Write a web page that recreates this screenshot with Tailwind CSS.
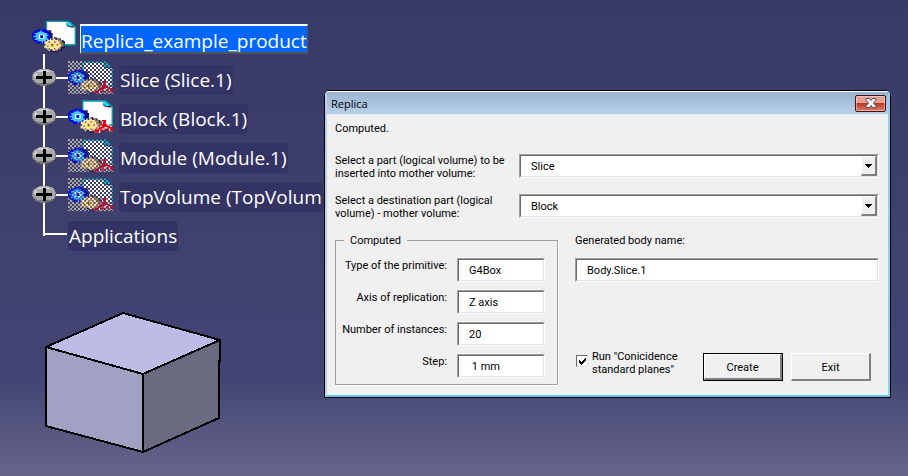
<!DOCTYPE html>
<html lang="en">
<head>
<meta charset="utf-8">
<title>Replica</title>
<script src="https://cdn.jsdelivr.net/npm/@tailwindcss/browser@4"></script>
</head>
<body class="relative min-h-screen overflow-hidden bg-linear-to-b from-[#393967] via-[#454575] via-80% to-[#66668b] font-['Open_Sans','Noto_Sans',sans-serif]">

<!-- Shared icon shapes -->
<svg class="absolute size-0" aria-hidden="true">
  <defs>
    <pattern id="checker" width="4" height="4" patternUnits="userSpaceOnUse">
      <path d="M0 0H2V2H0zM2 2H4V4H2z" fill="#fff"/>
    </pattern>
    <mask id="mesh" maskUnits="userSpaceOnUse" x="0" y="0" width="45" height="33"><rect width="45" height="33" fill="url(#checker)"/></mask>
    <symbol id="page" viewBox="0 0 32 23">
      <path d="M10 0H27V1H29V2H30V3H31V4H32V18H10z" fill="#00a0a8"/>
      <path d="M11 1H25V4H31V17H11z" fill="#fff"/>
      <path d="M25 1H27V2H28V3H29V4H27V3H26V2H25z" fill="#40e0ff"/>
      <path d="M26 4H31V5H28V4.500H26z" fill="#101050"/>
    </symbol>
    <symbol id="gears" viewBox="0 0 32 23">
      <path d="M5 6H7V7H8V6H10V7H12V8H13V9H14V13H13V15H12V16H10V17H8V16H6V17H4V16H3V15H1V13H0V9H1V8H2V7H5z" fill="#0000e8"/>
      <path d="M12 7H14V9H15V13H14V15H12V14H13V9H12z" fill="#15155a"/>
      <path d="M4 8H6V7H7V8H9V9H11V10H12V11H11V13H12V14H10V15H8V16H7V15H4V14H2V13H3V12H1V11H3V10H2V9H4z" fill="#40c8ff"/>
      <path d="M5 10H9V13H5z" fill="#fff"/><path d="M6 10.500H8V12.500H6z" fill="#0000e8"/>
      <path d="M13 13H16V12H18V13H21V14H23V15H24V17H23V18H24V20H22V22H19V23H15V22H13z" fill="#15155a"/>
      <path d="M18 13H20V14H22V16H23V19H21V21H19V22H17V20H18z" fill="#907c58"/>
      <path d="M11 14H13V13H14V14H15V13H17V14H19V15H20V17H21V19H20V20H19V21H17V22H15V21H13V22H12V21H11V20H9V18H10V17H9V15H11z" fill="#ffe29a"/>
      <path d="M12 15H13V16H12zM16 15H17V16H16zM11 18H12V19H11zM12 20H13V21H12zM16 20H17V21H16zM18 17H19V18H18z" fill="#504870"/>
      <path d="M14 17H16V19H14z" fill="#d8c800"/><path d="M14 17H15V18H14z" fill="#222"/>
    </symbol>
    <symbol id="part" viewBox="0 0 32 23">
      <path d="M24 14H28V17H29V18H31V19H32V22H29V20H26V21H23V23H19V21H21V19H23V17H24z" fill="#fff"/>
      <path d="M24 14H27V17H28V18H30V19H32V22H30V20H28V19H26V20H24V21H22V23H19V21H21V20H22V19H24V17H25V15H24z" fill="#e80010"/>
      <path d="M25 16H26V18H25zM23 21H26V22H23zM28 20H29V22H28zM23 16H24V18H23z" fill="#e80010"/>
    </symbol>
    <symbol id="plus" viewBox="0 0 24 17">
      <path d="M7 0H17V1H20V2H22V4H23V6H24V11H23V13H21V15H18V16H15V17H8V16H5V15H3V13H1V11H0V5H1V3H3V2H5V1H7z" fill="#777"/>
      <path d="M7 0H17V1H20V2H22V4H23V11H22V13H19V14H5V13H3V11H1V5H2V3H4V2H5V1H7z" fill="#a8a8a8"/>
      <path d="M7 1H16V2H18V3H5V2H7zM3 4H5V8H2V6H3z" fill="#d0d0d0"/>
      <path d="M11 2H14V7H20V10H14V15H11V10H4V7H11z" fill="#000"/>
    </symbol>
    <symbol id="icon-solid" viewBox="0 0 45 33">
      <use href="#page" width="45" height="33"/><use href="#gears" width="45" height="33"/><use href="#part" width="45" height="33"/>
    </symbol>
    <symbol id="icon-mesh" viewBox="0 0 45 33">
      <path d="M0 0H15V10H21V18H34V23H45V33H0z" fill="#a8a8a0" mask="url(#mesh)"/>
      <g mask="url(#mesh)"><use href="#page" width="45" height="33"/></g>
      <use href="#gears" width="45" height="33" opacity=".4"/>
      <g mask="url(#mesh)"><use href="#gears" width="45" height="33"/></g>
      <use href="#part" width="45" height="33" opacity=".3"/>
      <g mask="url(#mesh)"><use href="#part" width="45" height="33"/></g>
    </symbol>
  </defs>
</svg>

<!-- Specification tree -->
<nav aria-label="Specification tree" class="w-max pl-8 pt-5 text-[19px] text-white">
  <div class="flex h-[34px] items-start gap-1">
    <svg class="h-[33px] w-[44px]" viewBox="0 0 45 33"><use href="#page" width="45" height="33"/><use href="#gears" width="45" height="33"/></svg>
    <span class="mt-1 h-[30px] border-t-2 border-l border-r border-b-2 border-t-white border-l-white border-r-[#555] border-b-[#555] bg-[#0066ff] leading-[30px]">Replica_example_product</span>
  </div>
  <ul class="relative pt-1">
    <li class="absolute top-0 left-[11px] h-[182px] w-0.5 bg-white" aria-hidden="true"></li>
    <li class="flex h-[39px] items-center">
      <button aria-label="Expand Slice" class="relative"><svg class="h-[17px] w-6" shape-rendering="crispEdges"><use href="#plus"/></svg></button>
      <span class="h-0.5 w-3 bg-white"></span>
      <svg class="h-[33px] w-[45px]"><use href="#icon-mesh"/></svg>
      <span class="ml-1.5 mt-1 h-[30px] rounded-sm bg-[#333364] px-px leading-[30px]">Slice (Slice.1)</span>
    </li>
    <li class="flex h-[39px] items-center">
      <button aria-label="Expand Block" class="relative"><svg class="h-[17px] w-6" shape-rendering="crispEdges"><use href="#plus"/></svg></button>
      <span class="h-0.5 w-3 bg-white"></span>
      <svg class="h-[33px] w-[45px]"><use href="#icon-solid"/></svg>
      <span class="ml-1.5 mt-1 h-[30px] rounded-sm bg-[#333364] px-px leading-[30px]">Block (Block.1)</span>
    </li>
    <li class="flex h-[39px] items-center">
      <button aria-label="Expand Module" class="relative"><svg class="h-[17px] w-6" shape-rendering="crispEdges"><use href="#plus"/></svg></button>
      <span class="h-0.5 w-3 bg-white"></span>
      <svg class="h-[33px] w-[45px]"><use href="#icon-mesh"/></svg>
      <span class="ml-1.5 mt-1 h-[30px] rounded-sm bg-[#333364] px-px leading-[30px]">Module (Module.1)</span>
    </li>
    <li class="flex h-[39px] items-center">
      <button aria-label="Expand TopVolume" class="relative"><svg class="h-[17px] w-6" shape-rendering="crispEdges"><use href="#plus"/></svg></button>
      <span class="h-0.5 w-3 bg-white"></span>
      <svg class="h-[33px] w-[45px]"><use href="#icon-mesh"/></svg>
      <span class="ml-1.5 mt-1 h-[30px] rounded-sm bg-[#333364] px-px leading-[30px]">TopVolume (TopVolum</span>
    </li>
    <li class="flex h-[39px] items-center pl-[11px]">
      <span class="h-0.5 w-6 bg-white"></span>
      <span class="ml-px mt-1 h-[30px] rounded-sm bg-[#333364] px-px leading-[30px]">Applications</span>
    </li>
  </ul>
</nav>

<!-- Modelled solid -->
<svg class="absolute left-[44px] top-[311px] h-[144px] w-[178px]" viewBox="44 311 178 144" role="img" aria-label="Block solid" shape-rendering="crispEdges" stroke="#000" stroke-width="2" stroke-linejoin="round">
  <path d="M46 347L123 313L220 340L143 374z" fill="#bcbce6"/>
  <path d="M46 347L143 374V452L46 426z" fill="#a1a1c3"/>
  <path d="M143 374L220 340V361H219V418L143 452z" fill="#6a6a80"/>
</svg>

<!-- Replica window -->
<section role="dialog" aria-labelledby="dlg-title" class="absolute left-[324px] right-[17px] top-[90px] rounded-t-md border border-black bg-[#f0f0f0] font-[Roboto,sans-serif] text-[11px] leading-[13px] text-black">
  <div class="rounded-t-sm border-t border-l-2 border-r-2 border-b-2 border-t-white border-l-[#b9d1ea] border-r-[#8fd0ee] border-b-[#5fc4e8]">
    <header class="flex h-[22px] items-center justify-between bg-linear-to-b from-[#9ab3d0] to-[#b9d1ea] pl-1 pr-0.5">
      <h1 id="dlg-title" class="font-['Open_Sans',sans-serif] text-[11px]">Replica</h1>
      <button aria-label="Close" class="flex h-[17px] w-[31px] items-center justify-center rounded-xs border border-[#43121a] bg-linear-to-b from-[#e8a090] from-45% via-[#bb3a24] via-50% to-[#d87c68] shadow-[inset_0_0_0_1px_#ffffff66]">
        <svg class="h-2.5 w-3" viewBox="0 0 12 10"><path d="M1 .5H4.500L6 2.500L7.500 .5H11V2L8.500 5L11 8V9.500H7.500L6 7.500L4.500 9.500H1V8L3.500 5L1 2z" fill="#f4f4f4" stroke="#555566"/></svg>
      </button>
    </header>
    <form class="pt-2 pr-[9px] pb-2.5 pl-2" onsubmit="return false">
      <p>Computed.</p>
      <div class="mt-[19px] flex items-start">
        <label for="part-select" class="w-[184px] shrink-0">Select a part (logical volume) to be<br>inserted into mother volume:</label>
        <div class="relative h-6 flex-1 border border-t-[#a0a0a0] border-l-[#a0a0a0] border-r-white border-b-white">
          <select id="part-select" class="block h-full w-full appearance-none border border-t-[#696969] border-l-[#696969] border-r-[#e3e3e3] border-b-[#e3e3e3] bg-white pl-2.5"><option>Slice</option></select>
          <span class="pointer-events-none absolute top-px right-px bottom-px flex w-4 items-center justify-center border-t border-l border-r-2 border-b-2 border-t-white border-l-white border-r-[#808080] border-b-[#808080] bg-[#f0f0f0]"><svg class="h-1 w-[7px]" viewBox="0 0 7 4" shape-rendering="crispEdges"><path d="M0 0H7V1H6V2H5V3H4V4H3V3H2V2H1V1H0z"/></svg></span>
        </div>
      </div>
      <div class="mt-3.5 flex items-start">
        <label for="dest" class="w-[184px] shrink-0">Select a destination part (logical<br>volume) - mother volume:</label>
        <div class="relative h-6 flex-1 border border-t-[#a0a0a0] border-l-[#a0a0a0] border-r-white border-b-white">
          <select id="dest" class="block h-full w-full appearance-none border border-t-[#696969] border-l-[#696969] border-r-[#e3e3e3] border-b-[#e3e3e3] bg-white pl-2.5"><option>Block</option></select>
          <span class="pointer-events-none absolute top-px right-px bottom-px flex w-4 items-center justify-center border-t border-l border-r-2 border-b-2 border-t-white border-l-white border-r-[#808080] border-b-[#808080] bg-[#f0f0f0]"><svg class="h-1 w-[7px]" viewBox="0 0 7 4" shape-rendering="crispEdges"><path d="M0 0H7V1H6V2H5V3H4V4H3V3H2V2H1V1H0z"/></svg></span>
        </div>
      </div>
      <div class="mt-3.5 flex gap-[17px]">
        <fieldset class="w-[223px] min-w-0 shrink-0 border border-[#a0a0a0] pr-3 pl-1.5 pb-1.5 shadow-[1px_1px_0_#fff]">
          <legend class="ml-0.5 px-1.5">Computed</legend>
          <div class="grid grid-cols-[minmax(0,1fr)_88px] gap-x-2.5 gap-y-2 pt-[11px] text-right">
            <label for="prim" class="pt-px whitespace-nowrap">Type of the primitive:</label>
            <div class="h-6 border border-t-[#a0a0a0] border-l-[#a0a0a0] border-r-white border-b-white"><input id="prim" value="G4Box" class="block h-full w-full border border-t-[#696969] border-l-[#696969] border-r-[#e3e3e3] border-b-[#e3e3e3] bg-white pl-2.5"></div>
            <label for="axis" class="pt-px whitespace-nowrap">Axis of replication:</label>
            <div class="h-6 border border-t-[#a0a0a0] border-l-[#a0a0a0] border-r-white border-b-white"><input id="axis" value="Z axis" class="block h-full w-full border border-t-[#696969] border-l-[#696969] border-r-[#e3e3e3] border-b-[#e3e3e3] bg-white pl-2.5"></div>
            <label for="num" class="pt-px whitespace-nowrap">Number of instances:</label>
            <div class="h-6 border border-t-[#a0a0a0] border-l-[#a0a0a0] border-r-white border-b-white"><input id="num" value="20" class="block h-full w-full border border-t-[#696969] border-l-[#696969] border-r-[#e3e3e3] border-b-[#e3e3e3] bg-white pl-2.5"></div>
            <label for="step" class="pt-px whitespace-nowrap">Step:</label>
            <div class="h-6 border border-t-[#a0a0a0] border-l-[#a0a0a0] border-r-white border-b-white"><input id="step" value=" 1 mm" class="block h-full w-full border border-t-[#696969] border-l-[#696969] border-r-[#e3e3e3] border-b-[#e3e3e3] bg-white pl-2.5"></div>
          </div>
        </fieldset>
        <div class="flex flex-1 flex-col">
          <label for="body">Generated body name:</label>
          <div class="mt-[11px] h-6 border border-t-[#a0a0a0] border-l-[#a0a0a0] border-r-white border-b-white"><input id="body" value="Body.Slice.1" class="block h-full w-full border border-t-[#696969] border-l-[#696969] border-r-[#e3e3e3] border-b-[#e3e3e3] bg-white pl-2.5"></div>
          <div class="mt-auto mb-1 flex items-end pr-2">
            <span class="relative mb-3.5 ml-px size-3">
              <input id="run" type="checkbox" checked class="block size-3 appearance-none border border-t-[#696969] border-l-[#696969] border-r-[#e3e3e3] border-b-[#e3e3e3] bg-white">
              <svg class="pointer-events-none absolute top-[3px] left-[3px] size-[7px]" viewBox="0 0 7 7" shape-rendering="crispEdges"><path d="M0 2H1V3H2V4H3V3H4V2H5V1H6V0H7V3H6V4H5V5H4V6H3V7H2V6H1V5H0z"/></svg>
            </span>
            <label for="run" class="mb-[5px] ml-1 whitespace-nowrap">Run "Conicidence<br>standard planes"</label>
            <button class="ml-auto h-7 w-20 border border-black"><span class="flex h-full items-center justify-center border-t border-l border-r-2 border-b-2 border-t-white border-l-white border-r-[#808080] border-b-[#808080] pt-0.5">Create</span></button>
            <button class="ml-2 h-7 w-20 border-t border-l border-r-2 border-b-2 border-t-white border-l-white border-r-[#808080] border-b-[#808080] pt-0.5">Exit</button>
          </div>
        </div>
      </div>
    </form>
  </div>
</section>
</body>
</html>
